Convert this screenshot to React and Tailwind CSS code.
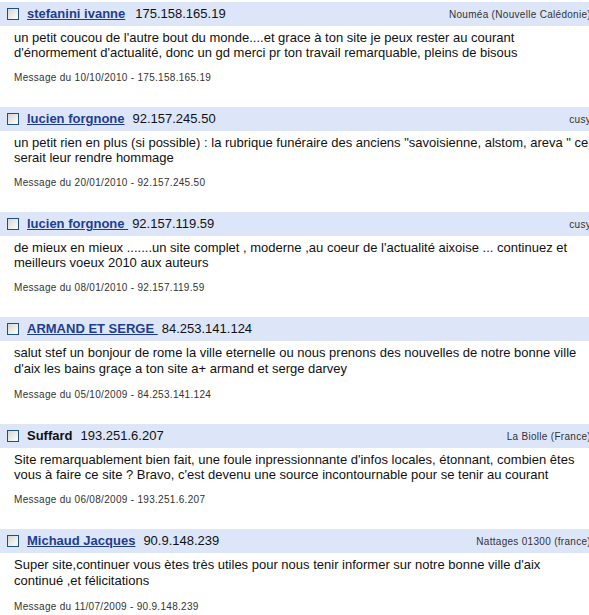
import React from "react";

const messages = [
  {
    name: "stefanini ivanne",
    link: true,
    ip: "175.158.165.19",
    gap: "ml-[10px]",
    place: "Nouméa (Nouvelle Calédonie)",
    lines: [
      "un petit coucou de l'autre bout du monde....et grace à ton site je peux rester au courant",
      "d'énormement d'actualité, donc un gd merci pr ton travail remarquable, pleins de bisous",
    ],
    date: "10/10/2010",
    lh: "leading-[15px]",
  },
  {
    name: "lucien forgnone",
    link: true,
    ip: "92.157.245.50",
    gap: "ml-[8px]",
    place: "cusy",
    lines: [
      'un petit rien en plus (si possible) : la rubrique funéraire des anciens "savoisienne, alstom, areva " ce',
      "serait leur rendre hommage",
    ],
    date: "20/01/2010",
    lh: "leading-[15px]",
  },
  {
    name: "lucien forgnone\u00a0",
    link: true,
    ip: "92.157.119.59",
    gap: "ml-[4px]",
    place: "cusy",
    lines: [
      "de mieux en mieux .......un site complet , moderne ,au coeur de l'actualité aixoise ... continuez et",
      "meilleurs voeux 2010 aux auteurs",
    ],
    date: "08/01/2010",
    lh: "leading-[15px]",
  },
  {
    name: "ARMAND ET SERGE\u00a0",
    link: true,
    ip: "84.253.141.124",
    gap: "ml-[4px]",
    place: "",
    lines: [
      "salut stef un bonjour de rome la ville eternelle ou nous prenons des nouvelles de notre bonne ville",
      "d'aix les bains graçe a ton site a+ armand et serge darvey",
    ],
    date: "05/10/2009",
    lh: "leading-[16px]",
  },
  {
    name: "Suffard",
    link: false,
    ip: "193.251.6.207",
    gap: "ml-[8px]",
    place: "La Biolle (France)",
    lines: [
      "Site remarquablement bien fait, une foule inpressionnante d'infos locales, étonnant, combien êtes",
      "vous à faire ce site ? Bravo, c'est devenu une source incontournable pour se tenir au courant",
    ],
    date: "06/08/2009",
    lh: "leading-[15px]",
  },
  {
    name: "Michaud Jacques",
    link: true,
    ip: "90.9.148.239",
    gap: "ml-[8px]",
    place: "Nattages 01300 (france)",
    lines: [
      "Super site,continuer vous ètes très utiles pour nous tenir informer sur notre bonne ville d'aix",
      "continué ,et félicitations",
    ],
    date: "11/07/2009",
    lh: "leading-[16px]",
  },
];

function Checkbox() {
  return (
    <span className="block h-[12px] w-[12px] shrink-0 border border-[#1c5180] bg-linear-to-br from-[#d6d6d0] to-white" />
  );
}

function Message({ m }) {
  return (
    <div className="pb-[23px]">
      <div className="flex h-[24px] items-center bg-[#dde6f9] pl-[7px] pr-[9px]">
        <Checkbox />
        {m.link ? (
          <a
            href="#"
            className="ml-[8px] text-[13px] font-bold text-[#1f3d8f] underline"
          >
            {m.name}
          </a>
        ) : (
          <span className="ml-[8px] text-[13px] font-bold text-[#111]">
            {m.name}
          </span>
        )}
        <span className={`${m.gap} text-[13px] text-[#111]`}>{m.ip}</span>
        <span className="ml-auto text-[10px] tracking-[0.3px] text-[#333]">
          {m.place}
        </span>
      </div>
      <div className="pl-[14px] pt-[4px]">
        <div className={`text-[13px] text-[#111] ${m.lh}`}>
          {m.lines.map((l, i) => (
            <div key={i} className="whitespace-nowrap">
              {l}
            </div>
          ))}
        </div>
        <div className="mt-[11px] text-[10px] leading-[13px] tracking-[0.3px] text-[#333]">
          Message du {m.date} - {m.ip}
        </div>
      </div>
    </div>
  );
}

export default function App() {
  return (
    <div
      className="h-[615px] w-[589px] overflow-hidden bg-white pt-[2px]"
      style={{ fontFamily: '"Liberation Sans", Arial, sans-serif' }}
    >
      <div className="w-[600px]">
        {messages.map((m, i) => (
          <Message key={i} m={m} />
        ))}
      </div>
    </div>
  );
}
